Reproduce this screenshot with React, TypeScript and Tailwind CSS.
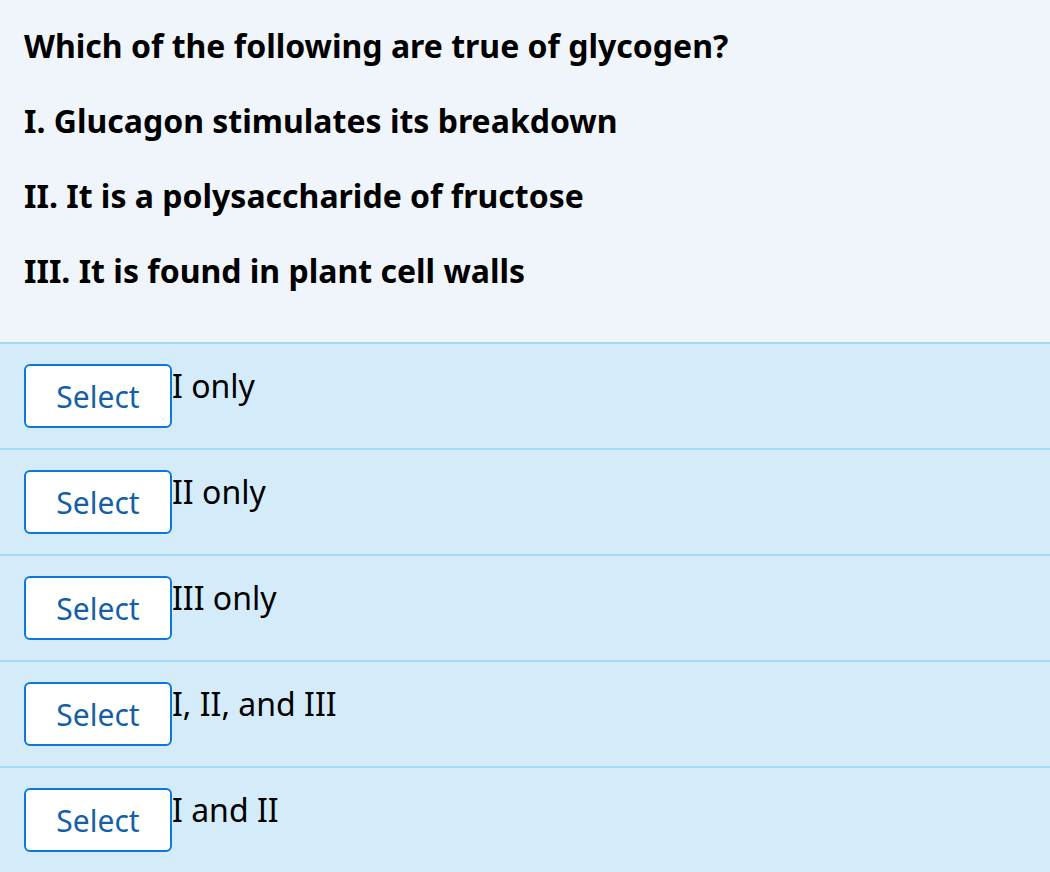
const options = ["I only", "II only", "III only", "I, II, and III", "I and II"];

const lines = [
  "Which of the following are true of glycogen?",
  "I. Glucagon stimulates its breakdown",
  "II. It is a polysaccharide of fructose",
  "III. It is found in plant cell walls",
];

export default function App() {
  return (
    <div
      className="min-h-screen bg-[#d4ecfa] text-black"
      style={{ fontFamily: '"Noto Sans", sans-serif' }}
    >
      {/* question */}
      <div className="bg-[#eff5fa] px-6 pt-[24px] pb-[50px]">
        {lines.map((l) => (
          <p key={l} className="mb-[32px] text-[32px] font-bold leading-[43px] last:mb-0">
            {l}
          </p>
        ))}
      </div>

      {/* answers */}
      {options.map((o) => (
        <div key={o} className="flex items-start border-t-2 border-[#a0dbf7] px-6 pt-5 pb-5">
          <button className="h-[64px] w-[148px] rounded-[6px] border-2 border-[#0d77e0] bg-white text-[30px] text-[#155fa6]">
            Select
          </button>
          <span className="pt-[2px] text-[32px] leading-[40px]">{o}</span>
        </div>
      ))}
    </div>
  );
}
